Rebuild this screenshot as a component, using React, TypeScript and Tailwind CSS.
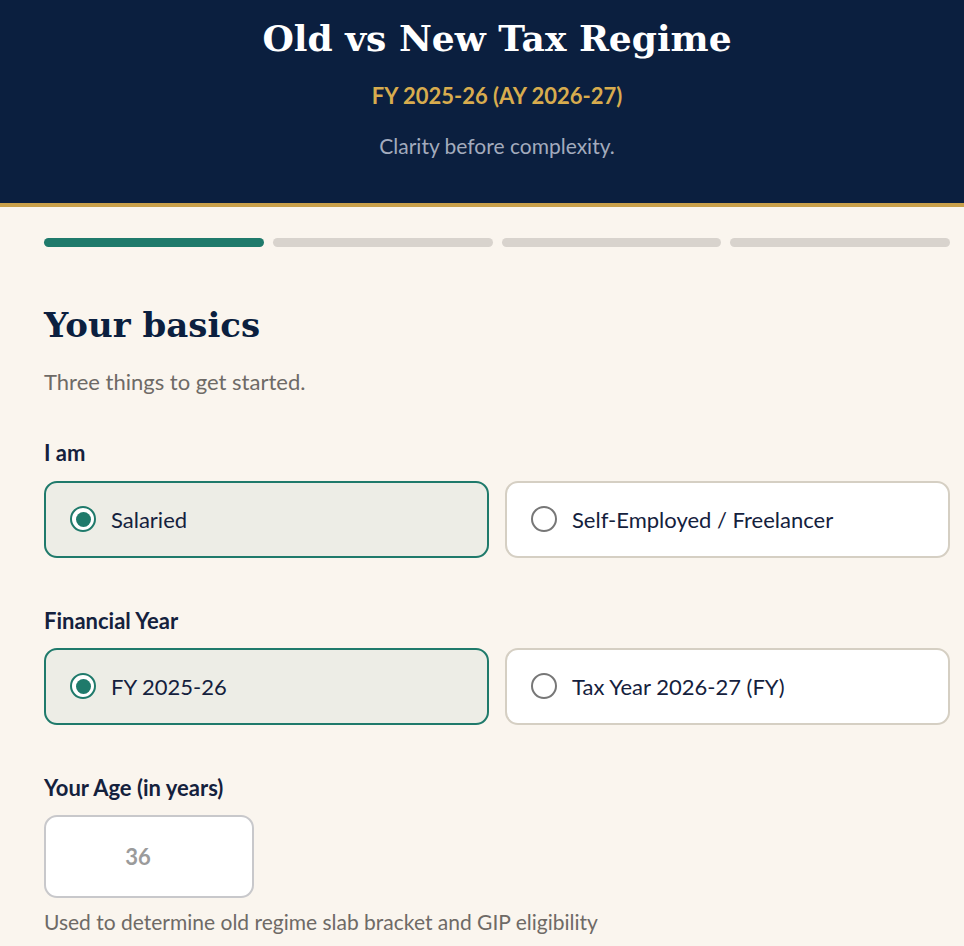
import { useState } from 'react';

const sans = "font-['Lato','Noto_Sans',sans-serif]";
const serif = "font-['DejaVu_Serif','Liberation_Serif',serif]";

const userTypes = ['Salaried', 'Self-Employed / Freelancer'];
const years = ['FY 2025-26', 'Tax Year 2026-27 (FY)'];

function RadioCard({ label, selected, onClick }: { label: string; selected: boolean; onClick: () => void }) {
  return (
    <button
      type="button"
      onClick={onClick}
      className={`flex h-[77px] items-center gap-[15px] rounded-[13px] border-2 px-[24px] text-left ${
        selected ? 'border-[#1f7a6b] bg-[#edede6]' : 'border-[#d5cfc3] bg-white'
      }`}
    >
      <span
        className={`flex h-[26px] w-[26px] items-center justify-center rounded-full border-2 bg-white ${
          selected ? 'border-[#1f7a6b]' : 'border-[#777]'
        }`}
      >
        {selected && <span className="h-[15px] w-[15px] rounded-full bg-[#1f7a6b]" />}
      </span>
      <span className="text-[22px] text-[#14213d]">{label}</span>
    </button>
  );
}

export default function App() {
  const [userType, setUserType] = useState(0);
  const [year, setYear] = useState(0);

  return (
    <div className="min-h-screen w-full overflow-hidden bg-[#faf5ee]">
      <div className={`w-[994px] ${sans}`}>
        <header className="border-b-4 border-[#c9a04a] bg-[#0b1f3f] pb-[41px] pt-[14px] text-center">
          <h1 className={`${serif} text-[36px] font-bold leading-[48px] text-white`}>Old vs New Tax Regime</h1>
          <p className="mt-[17px] text-[22px] font-bold text-[#d8ac4e]">FY 2025-26 (AY 2026-27)</p>
          <p className="mt-[18px] text-[21px] text-[#a3abbd]">Clarity before complexity.</p>
        </header>

        <main className="px-[44px] pt-[31px]">
          <div className="grid grid-cols-4 gap-[9px]">
            <div className="h-[9px] rounded-full bg-[#1f7a6b]" />
            <div className="h-[9px] rounded-full bg-[#d8d3cd]" />
            <div className="h-[9px] rounded-full bg-[#d8d3cd]" />
            <div className="h-[9px] rounded-full bg-[#d8d3cd]" />
          </div>

          <h2 className={`${serif} mt-[56px] text-[34px] font-bold leading-[44px] text-[#0b1f3f]`}>Your basics</h2>
          <p className="mt-[18px] text-[22px] text-[#6e6a66]">Three things to get started.</p>

          <p className="mt-[38px] text-[22px] font-bold text-[#14213d]">I am</p>
          <div className="mt-[12px] grid grid-cols-2 gap-[16px]">
            {userTypes.map((t, i) => (
              <RadioCard key={t} label={t} selected={userType === i} onClick={() => setUserType(i)} />
            ))}
          </div>

          <p className="mt-[46px] text-[22px] font-bold text-[#14213d]">Financial Year</p>
          <div className="mt-[11px] grid grid-cols-2 gap-[16px]">
            {years.map((t, i) => (
              <RadioCard key={t} label={t} selected={year === i} onClick={() => setYear(i)} />
            ))}
          </div>

          <p className="mt-[46px] text-[22px] font-bold text-[#14213d]">Your Age (in years)</p>
          <input
            defaultValue="36"
            className="mt-[11px] h-[83px] w-[210px] rounded-[13px] border-2 border-[#c8c8cb] bg-white pr-[22px] text-center text-[22px] font-bold text-[#9b9b9b] outline-none"
          />
          <p className="mt-[8px] text-[21px] text-[#6e6a66]">Used to determine old regime slab bracket and GIP eligibility</p>
        </main>
      </div>
    </div>
  );
}
